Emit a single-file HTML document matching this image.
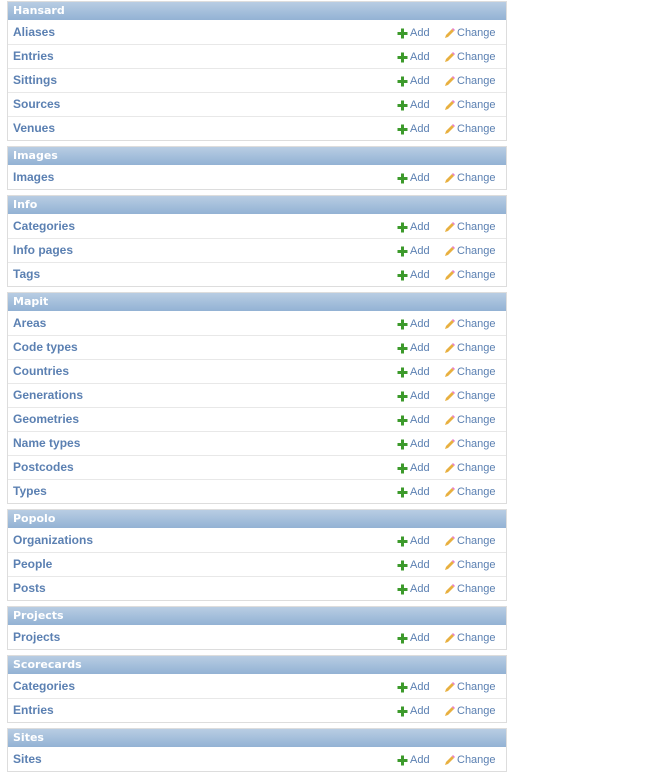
<!DOCTYPE html>
<html><head><meta charset="utf-8"><style>
body{margin:0;background:#fff;font-family:"Liberation Sans",Arial,sans-serif;}
.wrap{position:absolute;left:7px;top:1px;width:500px;}
.m{border:1px solid #ddd;margin-bottom:5px;box-sizing:border-box;}
.h{height:18px;background:linear-gradient(#b8cde3,#93b2d4);color:#fff;font-weight:bold;font-size:11px;line-height:18px;padding-left:5px;font-family:"DejaVu Sans",sans-serif;}
.r{height:24px;border-top:1px solid #e8e8e8;position:relative;box-sizing:border-box;}
.h+.r{border-top-color:transparent}
.n{position:absolute;left:5px;top:4px;font-size:12px;font-weight:bold;color:#5b80b2;}
.a,.c{position:absolute;top:5px;height:14px;font-size:11px;color:#5b80b2;display:flex;align-items:center;}
.a{left:389px}.c{left:436px}
.a svg,.c svg{margin-right:2px}
</style></head><body><div class="wrap">
<div class="m"><div class="h">Hansard</div>
<div class="r"><span class="n">Aliases</span><span class="a"><svg width="11" height="11"><path d="M4 0.5h3v3.5h3.5v3h-3.5v3.5h-3v-3.5h-3.5v-3h3.5z" fill="#3c9a2b"/></svg>Add</span><span class="c"><svg width="11" height="11"><path d="M1 10l1-3 6-6 2 2-6 6z" fill="#e8b040"/><path d="M8 1l1-1 2 2-1 1z" fill="#e87ad0"/></svg>Change</span></div>
<div class="r"><span class="n">Entries</span><span class="a"><svg width="11" height="11"><path d="M4 0.5h3v3.5h3.5v3h-3.5v3.5h-3v-3.5h-3.5v-3h3.5z" fill="#3c9a2b"/></svg>Add</span><span class="c"><svg width="11" height="11"><path d="M1 10l1-3 6-6 2 2-6 6z" fill="#e8b040"/><path d="M8 1l1-1 2 2-1 1z" fill="#e87ad0"/></svg>Change</span></div>
<div class="r"><span class="n">Sittings</span><span class="a"><svg width="11" height="11"><path d="M4 0.5h3v3.5h3.5v3h-3.5v3.5h-3v-3.5h-3.5v-3h3.5z" fill="#3c9a2b"/></svg>Add</span><span class="c"><svg width="11" height="11"><path d="M1 10l1-3 6-6 2 2-6 6z" fill="#e8b040"/><path d="M8 1l1-1 2 2-1 1z" fill="#e87ad0"/></svg>Change</span></div>
<div class="r"><span class="n">Sources</span><span class="a"><svg width="11" height="11"><path d="M4 0.5h3v3.5h3.5v3h-3.5v3.5h-3v-3.5h-3.5v-3h3.5z" fill="#3c9a2b"/></svg>Add</span><span class="c"><svg width="11" height="11"><path d="M1 10l1-3 6-6 2 2-6 6z" fill="#e8b040"/><path d="M8 1l1-1 2 2-1 1z" fill="#e87ad0"/></svg>Change</span></div>
<div class="r"><span class="n">Venues</span><span class="a"><svg width="11" height="11"><path d="M4 0.5h3v3.5h3.5v3h-3.5v3.5h-3v-3.5h-3.5v-3h3.5z" fill="#3c9a2b"/></svg>Add</span><span class="c"><svg width="11" height="11"><path d="M1 10l1-3 6-6 2 2-6 6z" fill="#e8b040"/><path d="M8 1l1-1 2 2-1 1z" fill="#e87ad0"/></svg>Change</span></div>
</div>
<div class="m"><div class="h">Images</div>
<div class="r"><span class="n">Images</span><span class="a"><svg width="11" height="11"><path d="M4 0.5h3v3.5h3.5v3h-3.5v3.5h-3v-3.5h-3.5v-3h3.5z" fill="#3c9a2b"/></svg>Add</span><span class="c"><svg width="11" height="11"><path d="M1 10l1-3 6-6 2 2-6 6z" fill="#e8b040"/><path d="M8 1l1-1 2 2-1 1z" fill="#e87ad0"/></svg>Change</span></div>
</div>
<div class="m"><div class="h">Info</div>
<div class="r"><span class="n">Categories</span><span class="a"><svg width="11" height="11"><path d="M4 0.5h3v3.5h3.5v3h-3.5v3.5h-3v-3.5h-3.5v-3h3.5z" fill="#3c9a2b"/></svg>Add</span><span class="c"><svg width="11" height="11"><path d="M1 10l1-3 6-6 2 2-6 6z" fill="#e8b040"/><path d="M8 1l1-1 2 2-1 1z" fill="#e87ad0"/></svg>Change</span></div>
<div class="r"><span class="n">Info pages</span><span class="a"><svg width="11" height="11"><path d="M4 0.5h3v3.5h3.5v3h-3.5v3.5h-3v-3.5h-3.5v-3h3.5z" fill="#3c9a2b"/></svg>Add</span><span class="c"><svg width="11" height="11"><path d="M1 10l1-3 6-6 2 2-6 6z" fill="#e8b040"/><path d="M8 1l1-1 2 2-1 1z" fill="#e87ad0"/></svg>Change</span></div>
<div class="r"><span class="n">Tags</span><span class="a"><svg width="11" height="11"><path d="M4 0.5h3v3.5h3.5v3h-3.5v3.5h-3v-3.5h-3.5v-3h3.5z" fill="#3c9a2b"/></svg>Add</span><span class="c"><svg width="11" height="11"><path d="M1 10l1-3 6-6 2 2-6 6z" fill="#e8b040"/><path d="M8 1l1-1 2 2-1 1z" fill="#e87ad0"/></svg>Change</span></div>
</div>
<div class="m"><div class="h">Mapit</div>
<div class="r"><span class="n">Areas</span><span class="a"><svg width="11" height="11"><path d="M4 0.5h3v3.5h3.5v3h-3.5v3.5h-3v-3.5h-3.5v-3h3.5z" fill="#3c9a2b"/></svg>Add</span><span class="c"><svg width="11" height="11"><path d="M1 10l1-3 6-6 2 2-6 6z" fill="#e8b040"/><path d="M8 1l1-1 2 2-1 1z" fill="#e87ad0"/></svg>Change</span></div>
<div class="r"><span class="n">Code types</span><span class="a"><svg width="11" height="11"><path d="M4 0.5h3v3.5h3.5v3h-3.5v3.5h-3v-3.5h-3.5v-3h3.5z" fill="#3c9a2b"/></svg>Add</span><span class="c"><svg width="11" height="11"><path d="M1 10l1-3 6-6 2 2-6 6z" fill="#e8b040"/><path d="M8 1l1-1 2 2-1 1z" fill="#e87ad0"/></svg>Change</span></div>
<div class="r"><span class="n">Countries</span><span class="a"><svg width="11" height="11"><path d="M4 0.5h3v3.5h3.5v3h-3.5v3.5h-3v-3.5h-3.5v-3h3.5z" fill="#3c9a2b"/></svg>Add</span><span class="c"><svg width="11" height="11"><path d="M1 10l1-3 6-6 2 2-6 6z" fill="#e8b040"/><path d="M8 1l1-1 2 2-1 1z" fill="#e87ad0"/></svg>Change</span></div>
<div class="r"><span class="n">Generations</span><span class="a"><svg width="11" height="11"><path d="M4 0.5h3v3.5h3.5v3h-3.5v3.5h-3v-3.5h-3.5v-3h3.5z" fill="#3c9a2b"/></svg>Add</span><span class="c"><svg width="11" height="11"><path d="M1 10l1-3 6-6 2 2-6 6z" fill="#e8b040"/><path d="M8 1l1-1 2 2-1 1z" fill="#e87ad0"/></svg>Change</span></div>
<div class="r"><span class="n">Geometries</span><span class="a"><svg width="11" height="11"><path d="M4 0.5h3v3.5h3.5v3h-3.5v3.5h-3v-3.5h-3.5v-3h3.5z" fill="#3c9a2b"/></svg>Add</span><span class="c"><svg width="11" height="11"><path d="M1 10l1-3 6-6 2 2-6 6z" fill="#e8b040"/><path d="M8 1l1-1 2 2-1 1z" fill="#e87ad0"/></svg>Change</span></div>
<div class="r"><span class="n">Name types</span><span class="a"><svg width="11" height="11"><path d="M4 0.5h3v3.5h3.5v3h-3.5v3.5h-3v-3.5h-3.5v-3h3.5z" fill="#3c9a2b"/></svg>Add</span><span class="c"><svg width="11" height="11"><path d="M1 10l1-3 6-6 2 2-6 6z" fill="#e8b040"/><path d="M8 1l1-1 2 2-1 1z" fill="#e87ad0"/></svg>Change</span></div>
<div class="r"><span class="n">Postcodes</span><span class="a"><svg width="11" height="11"><path d="M4 0.5h3v3.5h3.5v3h-3.5v3.5h-3v-3.5h-3.5v-3h3.5z" fill="#3c9a2b"/></svg>Add</span><span class="c"><svg width="11" height="11"><path d="M1 10l1-3 6-6 2 2-6 6z" fill="#e8b040"/><path d="M8 1l1-1 2 2-1 1z" fill="#e87ad0"/></svg>Change</span></div>
<div class="r"><span class="n">Types</span><span class="a"><svg width="11" height="11"><path d="M4 0.5h3v3.5h3.5v3h-3.5v3.5h-3v-3.5h-3.5v-3h3.5z" fill="#3c9a2b"/></svg>Add</span><span class="c"><svg width="11" height="11"><path d="M1 10l1-3 6-6 2 2-6 6z" fill="#e8b040"/><path d="M8 1l1-1 2 2-1 1z" fill="#e87ad0"/></svg>Change</span></div>
</div>
<div class="m"><div class="h">Popolo</div>
<div class="r"><span class="n">Organizations</span><span class="a"><svg width="11" height="11"><path d="M4 0.5h3v3.5h3.5v3h-3.5v3.5h-3v-3.5h-3.5v-3h3.5z" fill="#3c9a2b"/></svg>Add</span><span class="c"><svg width="11" height="11"><path d="M1 10l1-3 6-6 2 2-6 6z" fill="#e8b040"/><path d="M8 1l1-1 2 2-1 1z" fill="#e87ad0"/></svg>Change</span></div>
<div class="r"><span class="n">People</span><span class="a"><svg width="11" height="11"><path d="M4 0.5h3v3.5h3.5v3h-3.5v3.5h-3v-3.5h-3.5v-3h3.5z" fill="#3c9a2b"/></svg>Add</span><span class="c"><svg width="11" height="11"><path d="M1 10l1-3 6-6 2 2-6 6z" fill="#e8b040"/><path d="M8 1l1-1 2 2-1 1z" fill="#e87ad0"/></svg>Change</span></div>
<div class="r"><span class="n">Posts</span><span class="a"><svg width="11" height="11"><path d="M4 0.5h3v3.5h3.5v3h-3.5v3.5h-3v-3.5h-3.5v-3h3.5z" fill="#3c9a2b"/></svg>Add</span><span class="c"><svg width="11" height="11"><path d="M1 10l1-3 6-6 2 2-6 6z" fill="#e8b040"/><path d="M8 1l1-1 2 2-1 1z" fill="#e87ad0"/></svg>Change</span></div>
</div>
<div class="m"><div class="h">Projects</div>
<div class="r"><span class="n">Projects</span><span class="a"><svg width="11" height="11"><path d="M4 0.5h3v3.5h3.5v3h-3.5v3.5h-3v-3.5h-3.5v-3h3.5z" fill="#3c9a2b"/></svg>Add</span><span class="c"><svg width="11" height="11"><path d="M1 10l1-3 6-6 2 2-6 6z" fill="#e8b040"/><path d="M8 1l1-1 2 2-1 1z" fill="#e87ad0"/></svg>Change</span></div>
</div>
<div class="m"><div class="h">Scorecards</div>
<div class="r"><span class="n">Categories</span><span class="a"><svg width="11" height="11"><path d="M4 0.5h3v3.5h3.5v3h-3.5v3.5h-3v-3.5h-3.5v-3h3.5z" fill="#3c9a2b"/></svg>Add</span><span class="c"><svg width="11" height="11"><path d="M1 10l1-3 6-6 2 2-6 6z" fill="#e8b040"/><path d="M8 1l1-1 2 2-1 1z" fill="#e87ad0"/></svg>Change</span></div>
<div class="r"><span class="n">Entries</span><span class="a"><svg width="11" height="11"><path d="M4 0.5h3v3.5h3.5v3h-3.5v3.5h-3v-3.5h-3.5v-3h3.5z" fill="#3c9a2b"/></svg>Add</span><span class="c"><svg width="11" height="11"><path d="M1 10l1-3 6-6 2 2-6 6z" fill="#e8b040"/><path d="M8 1l1-1 2 2-1 1z" fill="#e87ad0"/></svg>Change</span></div>
</div>
<div class="m"><div class="h">Sites</div>
<div class="r"><span class="n">Sites</span><span class="a"><svg width="11" height="11"><path d="M4 0.5h3v3.5h3.5v3h-3.5v3.5h-3v-3.5h-3.5v-3h3.5z" fill="#3c9a2b"/></svg>Add</span><span class="c"><svg width="11" height="11"><path d="M1 10l1-3 6-6 2 2-6 6z" fill="#e8b040"/><path d="M8 1l1-1 2 2-1 1z" fill="#e87ad0"/></svg>Change</span></div>
</div>
</div></body></html>
